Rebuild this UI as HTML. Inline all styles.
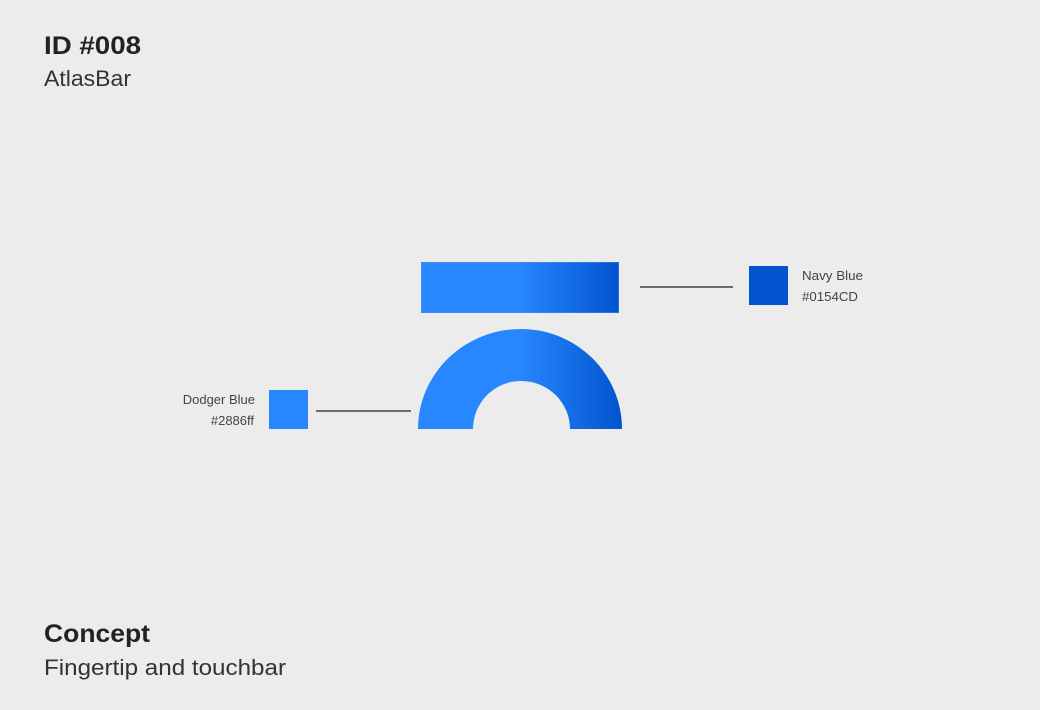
<!DOCTYPE html>
<html><head><style>
html,body{margin:0;padding:0;background:#ececec;width:1040px;height:710px;overflow:hidden}
svg{display:block}
</style></head><body>
<svg width="1040" height="710" xmlns="http://www.w3.org/2000/svg" font-family="Liberation Sans, sans-serif">
<defs>
<linearGradient id="g1" x1="520" y1="0" x2="619" y2="0" gradientUnits="userSpaceOnUse">
<stop offset="0" stop-color="#2886ff"/><stop offset="1" stop-color="#0154cd"/></linearGradient>
<linearGradient id="g2" x1="521" y1="0" x2="622" y2="0" gradientUnits="userSpaceOnUse">
<stop offset="0" stop-color="#2886ff"/><stop offset="1" stop-color="#0154cd"/></linearGradient>
</defs>
<rect width="1040" height="710" fill="#ececec"/>
<text x="44" y="54" font-size="25" font-weight="bold" fill="#222" textLength="97" lengthAdjust="spacingAndGlyphs">ID #008</text>
<text x="44" y="86" font-size="22" fill="#333" textLength="87" lengthAdjust="spacingAndGlyphs">AtlasBar</text>
<text x="44" y="642" font-size="25" font-weight="bold" fill="#222" textLength="106" lengthAdjust="spacingAndGlyphs">Concept</text>
<text x="44" y="675" font-size="22" fill="#333" textLength="242" lengthAdjust="spacingAndGlyphs">Fingertip and touchbar</text>

<rect x="421" y="262" width="100" height="51" fill="#2886ff"/>
<rect x="520" y="262" width="99" height="51" fill="url(#g1)"/>
<rect x="421.5" y="262.5" width="197" height="50" fill="none" stroke="#4a95ff" stroke-opacity="0.4"/>
<path d="M418 429 A103 100 0 0 1 521 329 L521 381 A48 48 0 0 0 473 429 Z" fill="#2886ff"/>
<path d="M521 329 A101 100 0 0 1 622 429 L570 429 A49 48 0 0 0 521 381 Z" fill="url(#g2)"/>

<line x1="640" y1="287" x2="733" y2="287" stroke="#6b6b6b" stroke-width="2"/>
<rect x="749" y="266" width="39" height="39" fill="#0154cd"/>
<text x="802" y="280" font-size="13" fill="#444" textLength="61" lengthAdjust="spacingAndGlyphs">Navy Blue</text>
<text x="802" y="301" font-size="13" fill="#444" textLength="56" lengthAdjust="spacingAndGlyphs">#0154CD</text>

<line x1="316" y1="411" x2="411" y2="411" stroke="#6b6b6b" stroke-width="2"/>
<rect x="269" y="390" width="39" height="39" fill="#2886ff"/>
<text x="255" y="404" font-size="13" fill="#444" text-anchor="end">Dodger Blue</text>
<text x="254" y="425" font-size="13" fill="#444" text-anchor="end">#2886ff</text>
</svg>
</body></html>
